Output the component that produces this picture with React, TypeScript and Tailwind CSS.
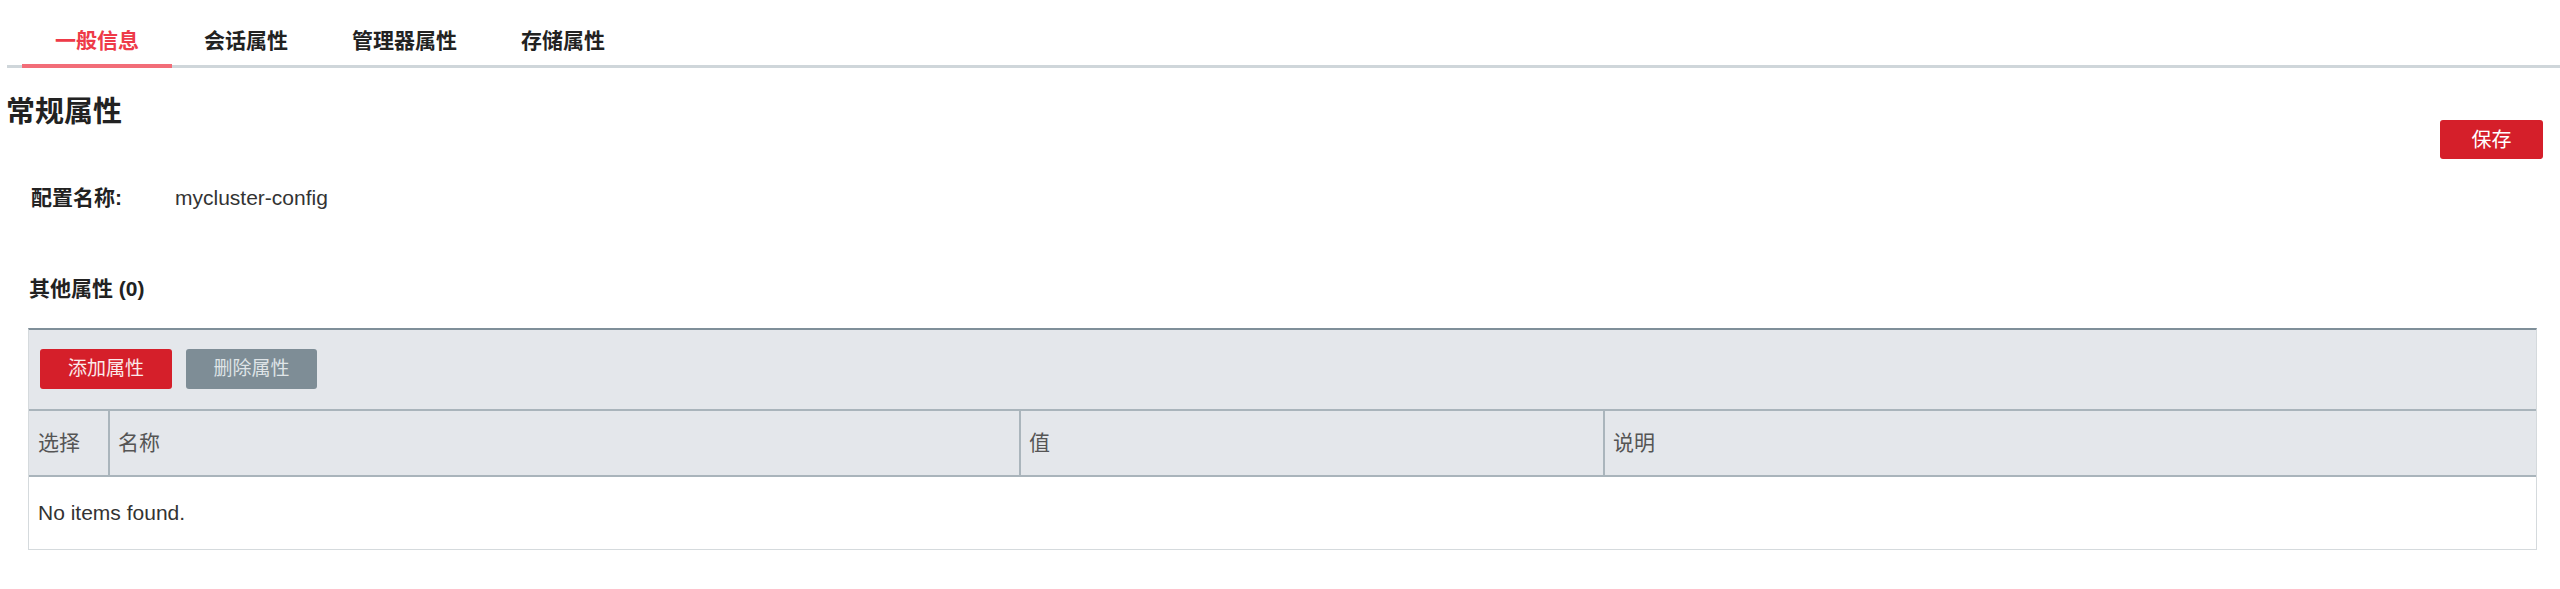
import React from "react";

const tabs = ["一般信息", "会话属性", "管理器属性", "存储属性"];

const columns = [
  { label: "选择" },
  { label: "名称" },
  { label: "值" },
  { label: "说明" },
];

export default function App() {
  return (
    <div
      className="w-full min-h-[589px] bg-white text-[#222]"
      style={{ fontFamily: '"Liberation Sans", "Noto Sans CJK SC", sans-serif' }}
    >
      {/* tab bar */}
      <div className="ml-[7px] h-[68px] flex pl-[15px] border-b-[3px] border-[#cfd6da]">
        {tabs.map((t, i) => (
          <div
            key={t}
            className={
              i === 0
                ? "h-[68px] px-[33px] pt-[18px] flex items-center text-[21px] font-bold text-[#ee3a48] border-b-[4px] border-[#f26d78]"
                : "h-[68px] px-[32px] pt-[18px] flex items-center text-[21px] font-bold text-[#222] border-b-[4px] border-transparent"
            }
          >
            {t}
          </div>
        ))}
      </div>

      <div className="pl-[6px] pr-[17px]">
        <div className="flex justify-between items-start">
          <h2 className="mt-[24px] text-[29px] leading-[40px] font-bold">常规属性</h2>
          <button className="mt-[52px] h-[39px] w-[103px] rounded-[3px] bg-[#d51f2a] text-white text-[20px]">
            保存
          </button>
        </div>

        <div className="mt-[24px] flex items-center pl-[25px] h-[30px] text-[21px]">
          <span className="w-[144px] font-bold">配置名称:</span>
          <span className="text-[#333]">mycluster-config</span>
        </div>

        <h3 className="mt-[61px] pl-[23px] h-[30px] leading-[30px] text-[21px] font-bold">其他属性 (0)</h3>

        {/* properties table */}
        <div className="mt-[24px] ml-[22px] mr-[6px] border border-[#d5dadd] border-t-2 border-t-[#7f8f99]">
          <div className="bg-[#e4e7eb] h-[81px] pt-[19px] pl-[11px] flex gap-[14px] border-b-2 border-[#a9b4bb]">
            <button className="h-[40px] w-[132px] rounded-[3px] bg-[#d51f2a] text-[#fbeaea] text-[19px]">
              添加属性
            </button>
            <button className="h-[40px] w-[131px] rounded-[3px] bg-[#7e8d96] text-[#dfe4e7] text-[19px]">
              删除属性
            </button>
          </div>
          <div className="grid grid-cols-[79px_911px_584px_1fr] bg-[#e4e7eb] h-[66px] border-b-2 border-[#a9b4bb] text-[21px] text-[#555]">
            {columns.map((c, i) => (
              <div
                key={c.label}
                className={
                  i === 0
                    ? "flex items-center pl-[9px]"
                    : "flex items-center pl-[8px] border-l-2 border-[#aab5bc]"
                }
              >
                {c.label}
              </div>
            ))}
          </div>
          <div className="h-[72px] flex items-center pl-[9px] text-[21px] text-[#333]">
            No items found.
          </div>
        </div>
      </div>
    </div>
  );
}
